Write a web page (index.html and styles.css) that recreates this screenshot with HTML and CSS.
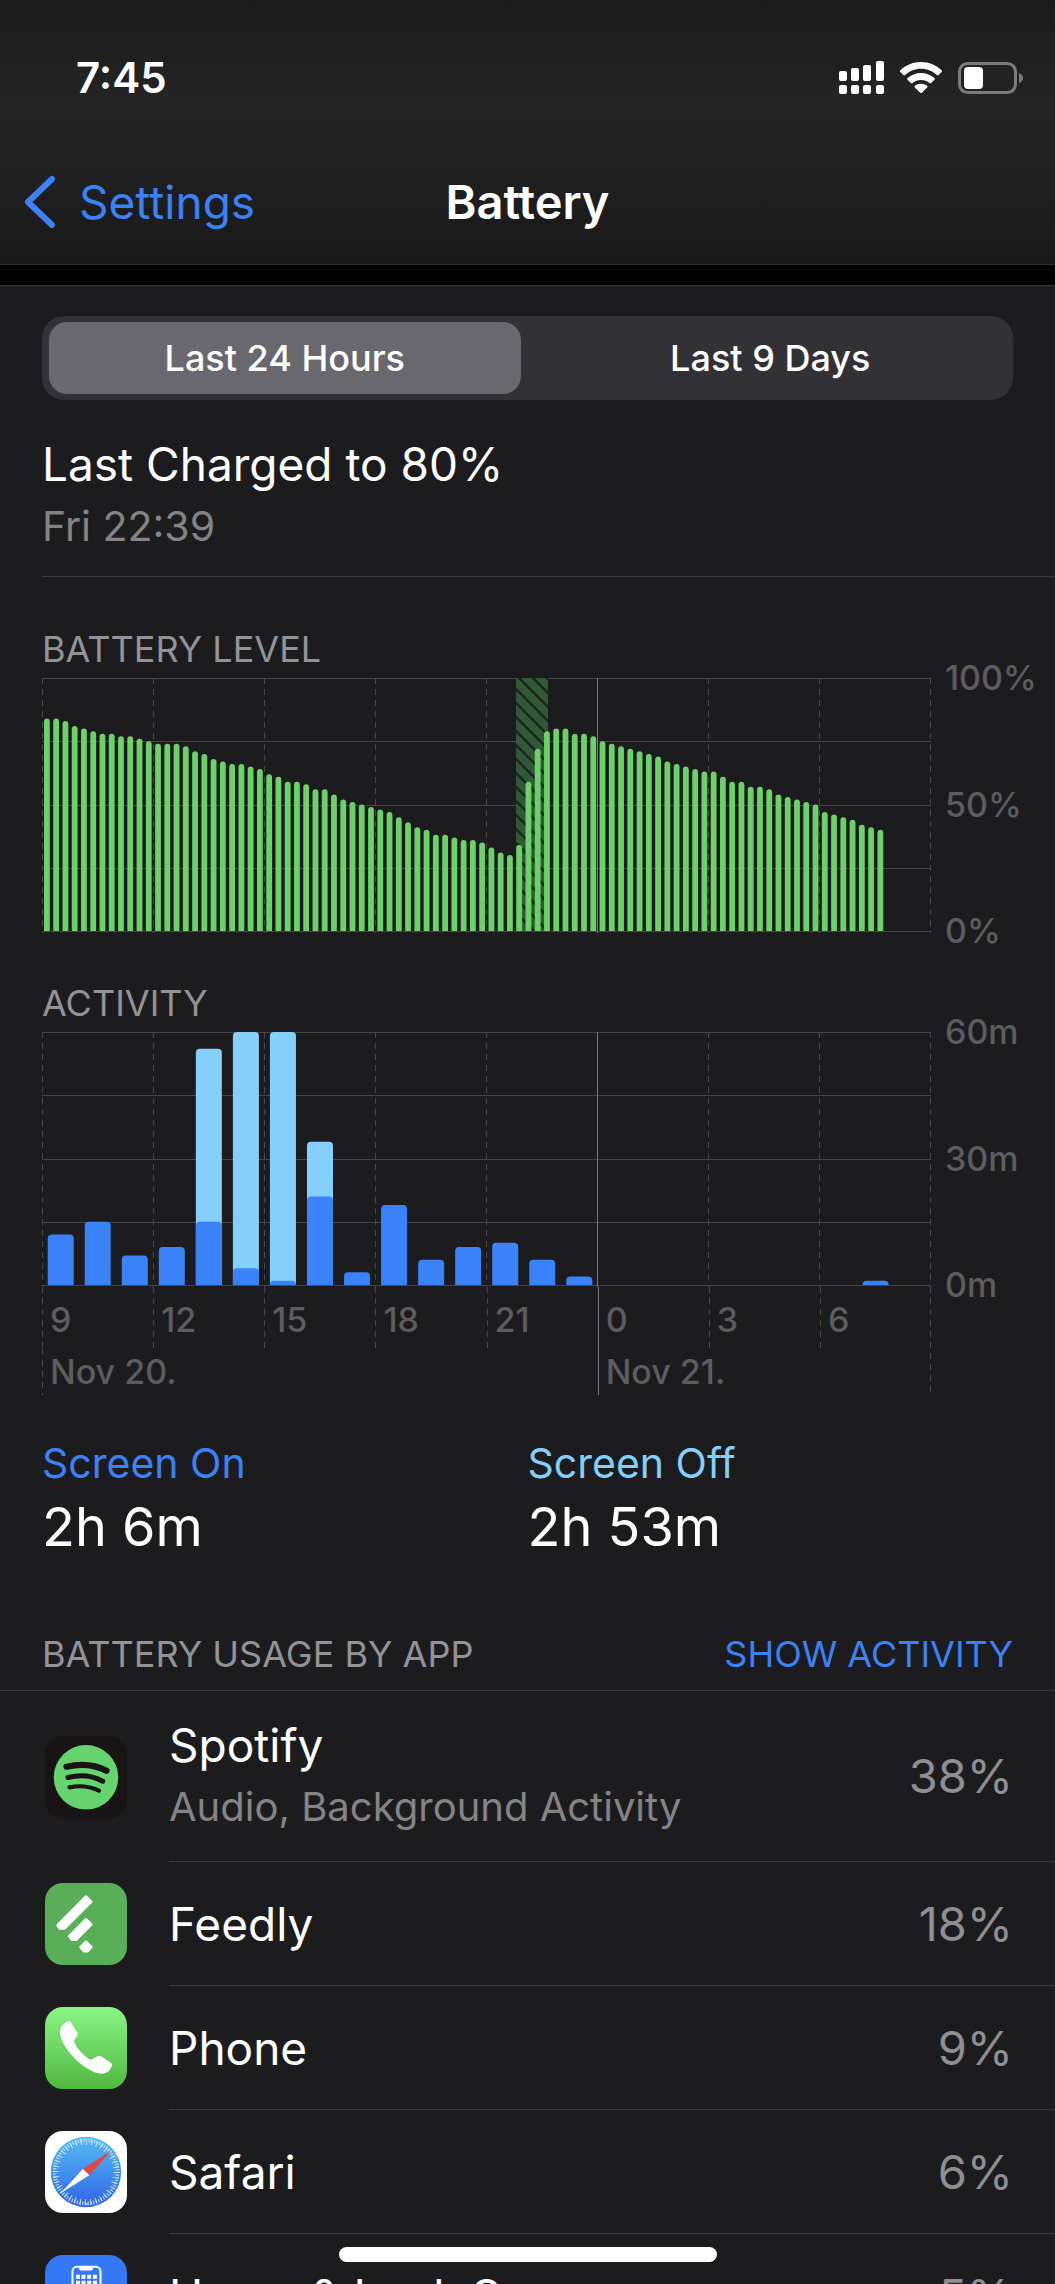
FILE: index.html
```html
<!DOCTYPE html>
<html lang="en">
<head>
<meta charset="utf-8">
<meta name="viewport" content="width=device-width, initial-scale=1">
<title>Battery</title>
<link rel="stylesheet" href="styles.css">
</head>
<body>
<div class="screen">
  <header class="header">
    <div class="status">
      <span class="status-time">7:45</span>
      <div class="status-icons">
        <svg class="signal" width="45" height="33" viewBox="0 0 45 33" fill="#fff" aria-hidden="true">
          <rect x="0" y="10" width="8" height="10" rx="2"/><rect x="12" y="7" width="8" height="13" rx="2"/>
          <rect x="24" y="4" width="8" height="16" rx="2"/><rect x="37" y="0" width="8" height="20" rx="2"/>
          <rect x="0" y="24" width="8" height="9" rx="2"/><rect x="12" y="24" width="8" height="9" rx="2"/>
          <rect x="24" y="24" width="8" height="9" rx="2"/><rect x="37" y="24" width="8" height="9" rx="2"/>
        </svg>
        <svg class="wifi" width="42" height="32" viewBox="0 0 42 32" fill="#fff" aria-hidden="true">
          <path d="M21 0C29 0 36.500 3.200 41.600 8.300Q42.500 9.200 41.600 10.100L38.700 13Q37.900 13.800 37 13C32.700 9 27.200 6.700 21 6.700S9.300 9 5 13Q4.100 13.800 3.300 13L.4 10.100Q-.5 9.200 .4 8.300C5.500 3.200 13 0 21 0Z"/>
          <path d="M21 10.900C26.200 10.900 30.900 12.900 34.400 16Q35.300 16.900 34.400 17.800L31.200 21Q30.400 21.700 29.500 21C27.200 19.100 24.300 17.900 21 17.900S14.800 19.100 12.500 21Q11.600 21.700 10.800 21L7.600 17.800Q6.700 16.900 7.600 16C11.100 12.900 15.800 10.900 21 10.900Z"/>
          <path d="M21 21.700C23.300 21.700 25.500 22.500 27.100 23.800Q28 24.600 27.100 25.500L21.900 30.700Q21 31.500 20.100 30.700L14.900 25.500Q14 24.600 14.900 23.800C16.500 22.500 18.700 21.700 21 21.700Z"/>
        </svg>
        <svg class="cell" width="65" height="32" viewBox="0 0 65 32" aria-hidden="true">
          <rect x="1.500" y="1.500" width="56" height="29" rx="8" fill="none" stroke="#7b7b7b" stroke-width="3"/>
          <rect x="6" y="5" width="19" height="22" rx="4" fill="#fff"/>
          <path d="M61 11Q65 12.500 65 16T61 21Z" fill="#7b7b7b"/>
        </svg>
      </div>
    </div>
    <nav class="nav">
      <a class="back" href="#">
        <svg width="32" height="54" viewBox="0 0 32 54" fill="none" stroke="currentColor" stroke-width="6" stroke-linecap="round" stroke-linejoin="round" aria-hidden="true"><path d="M28 4L4 27L28 50"/></svg>
        <span>Settings</span>
      </a>
      <h1 class="title">Battery</h1>
    </nav>
  </header>

  <main class="panel">
    <div class="segmented" role="radiogroup" aria-label="Time range">
      <label class="segment"><input type="radio" name="range" checked><span>Last 24 Hours</span></label>
      <label class="segment"><input type="radio" name="range"><span>Last 9 Days</span></label>
    </div>

    <section class="charged">
      <p class="charged-title">Last Charged to 80%</p>
      <p class="charged-time">Fri 22:39</p>
    </section>

    <section class="charts">
      <h2 class="caption">BATTERY LEVEL</h2>
      <div class="chart">
        <svg class="plot" id="level" viewBox="0 0 889 256" role="img" aria-label="Battery level">
          <defs>
            <pattern id="hatch" width="14" height="14" patternUnits="userSpaceOnUse">
              <rect width="14" height="14" fill="#305a37"/>
              <path d="M-2 -2L16 16M-2 12L2 16M12 -2L16 2" stroke="#17261a" stroke-width="2.600"/>
            </pattern>
          </defs>
        </svg>
        <div class="scale"><span>100%</span><span>50%</span><span>0%</span></div>
      </div>

      <h2 class="caption caption-next">ACTIVITY</h2>
      <div class="chart">
        <svg class="plot" id="activity" viewBox="0 0 889 256" role="img" aria-label="Activity"></svg>
        <div class="scale"><span>60m</span><span>30m</span><span>0m</span></div>
        <div class="axis">
          <span class="hour">9</span><span class="hour">12</span><span class="hour">15</span><span class="hour">18</span>
          <span class="hour">21</span><span class="hour midnight">0</span><span class="hour">3</span><span class="hour">6</span>
          <span class="date">Nov 20.</span><span class="date midnight">Nov 21.</span>
        </div>
      </div>
    </section>

    <dl class="totals">
      <div class="total"><dt class="on">Screen On</dt><dd>2h 6m</dd></div>
      <div class="total"><dt class="off">Screen Off</dt><dd>2h 53m</dd></div>
    </dl>

    <div class="usage-head">
      <h2 class="caption">BATTERY USAGE BY APP</h2>
      <button class="toggle" type="button">SHOW ACTIVITY</button>
    </div>
    <ul class="apps">
      <li class="app app-tall">
        <svg class="icon" viewBox="0 0 82 82" fill="none" stroke="#181414" stroke-linecap="round" aria-hidden="true">
          <rect width="82" height="82" rx="18" fill="#181414" stroke="none"/>
          <circle cx="41" cy="41.300" r="32.300" fill="#65d46e" stroke="none"/>
          <path d="M21.500 30.700Q44 25.500 61.500 34.800" stroke-width="6.200"/>
          <path d="M23 41.500Q42 36.500 57.800 45.200" stroke-width="5"/>
          <path d="M24.500 51.400Q40 48 54 54.700" stroke-width="4.200"/>
        </svg>
        <div class="app-body"><div class="app-text"><p class="app-name">Spotify</p><p class="app-note">Audio, Background Activity</p></div><span class="share">38%</span></div>
      </li>
      <li class="app">
        <svg class="icon" viewBox="0 0 82 82" aria-hidden="true">
          <rect width="82" height="82" rx="18" fill="#58af58"/>
          <g fill="#fff" stroke="#fff" stroke-width="3" stroke-linejoin="round">
            <path d="M41 13.800L46 18.800L19.500 45.300H15L12.700 42.200Z"/>
            <path d="M41 36.500L46 41.400L31 56.500H27L24.500 53.200Z"/>
            <path d="M41 59L46 64L42.500 68H39L35.800 64Z"/>
          </g>
        </svg>
        <div class="app-body"><p class="app-name">Feedly</p><span class="share">18%</span></div>
      </li>
      <li class="app">
        <svg class="icon" viewBox="0 0 82 82" aria-hidden="true">
          <defs><linearGradient id="phone-bg" x2="0" y2="1"><stop stop-color="#8af586"/><stop offset="1" stop-color="#50b83e"/></linearGradient></defs>
          <rect width="82" height="82" rx="18" fill="url(#phone-bg)"/>
          <path d="M22.500 14.500Q24.500 13.600 26 15.500L32 25Q33.400 27.200 32 29.300L29.700 32.500Q28.600 34.500 29.700 36.300Q34.500 45.500 44 52Q46 53.200 48 51.800L52.500 49.300Q54.500 48.300 56.500 49.500L65.500 55.500Q68 57.300 66.800 59.600Q63.500 66.700 57 66.700C41 66.700 15 40.500 15 24.500Q15.500 17.300 22.500 14.500Z" fill="#fff"/>
        </svg>
        <div class="app-body"><p class="app-name">Phone</p><span class="share">9%</span></div>
      </li>
      <li class="app">
        <svg class="icon" viewBox="0 0 82 82" aria-hidden="true">
          <defs><linearGradient id="safari-bg" x2="0" y2="1"><stop stop-color="#54bdf2"/><stop offset="1" stop-color="#3264e8"/></linearGradient></defs>
          <rect width="82" height="82" rx="18" fill="#fff"/>
          <circle cx="41" cy="41" r="35.200" fill="url(#safari-bg)"/>
          <circle cx="41" cy="41" r="31.500" fill="none" stroke="#d5eafd" stroke-width="3.600" pathLength="144" stroke-dasharray=".7 1.300"/>
          <circle cx="41" cy="41" r="30.300" fill="none" stroke="#d5eafd" stroke-width="6" pathLength="144" stroke-dasharray=".7 3.300"/>
          <path d="M66.500 19.500L37.800 38L44.300 44.300Z" fill="#e3483e"/>
          <path d="M16 62L37.800 38L44.300 44.300Z" fill="#fff"/>
        </svg>
        <div class="app-body"><p class="app-name">Safari</p><span class="share">6%</span></div>
      </li>
      <li class="app">
        <svg class="icon" viewBox="0 0 82 82" fill="#fff" aria-hidden="true">
          <rect width="82" height="82" rx="18" fill="#3478f6"/>
          <rect x="27.500" y="11.800" width="28" height="54" rx="4.500" fill="none" stroke="#fff" stroke-width="2"/>
          <path d="M34 11.500H48V13Q48 15.500 45.500 15.500H36.500Q34 15.500 34 13Z"/>
          <path d="M31 19.700h4v4h-4zM36.500 19.700h4v4h-4zM42.200 19.700h4v4h-4zM47.900 19.700h4v4h-4zM31 25.700h4v4h-4zM36.500 25.700h4v4h-4zM42.200 25.700h4v4h-4zM47.900 25.700h4v4h-4z"/>
        </svg>
        <div class="app-body"><p class="app-name">Home &amp; Lock Screen</p><span class="share">5%</span></div>
      </li>
    </ul>
  </main>
  <div class="home-indicator"></div>
</div>
<script src="script.js"></script>
</body>
</html>
```
FILE: styles.css
```css
* { box-sizing: border-box; margin: 0; padding: 0; }

body {
  background: #000;
  color: #fff;
  font-family: Inter, "Liberation Sans", sans-serif;
  font-size: 46px;
  line-height: 56px;
}

.screen {
  position: relative;
  display: flex;
  flex-direction: column;
  height: 100vh;
  overflow: hidden;
}

/* Status bar and navigation */
.header {
  flex: none;
  margin-bottom: 20px;
  border-bottom: 1px solid #2b2b2c;
  background: linear-gradient(#1a1a1a, #252525 40%, #222 60%, #181818);
}
.status {
  display: flex;
  align-items: center;
  justify-content: space-between;
  padding: 46px 32px 0 76px;
}
.status-time { font-size: 42px; line-height: 63px; font-weight: 600; }
.status-icons { display: flex; align-items: center; gap: 16px; }
.nav {
  display: grid;
  grid-template-columns: 1fr auto 1fr;
  align-items: center;
  padding: 30px 24px 0;
  height: 155px;
}
.back {
  display: flex;
  align-items: center;
  gap: 23px;
  color: #3b82f6;
  text-decoration: none;
}
.title { font-size: 47px; line-height: 56px; font-weight: 600; }

/* Scrolling content */
.panel {
  flex: 1;
  min-height: 0;
  overflow-y: auto;
  scrollbar-width: none;
  padding-top: 30px;
  border-top: 1px solid #3b3b3d;
  background: #1c1c1e;
}

.segmented {
  display: grid;
  grid-template-columns: 1fr 1fr;
  margin: 0 42px;
  border-radius: 22px;
  background: #323236;
}
.segment {
  position: relative;
  padding: 6px 7px;
  font-size: 36px;
  line-height: 72px;
  font-weight: 500;
  text-align: center;
}
.segment input { position: absolute; inset: 0; opacity: 0; }
.segment span { display: block; border-radius: 18px; }
.segment input:checked + span { background: #69686e; }

.charged {
  display: grid;
  gap: 9px;
  margin-left: 42px;
  padding: 36px 0 25px;
  border-bottom: 1px solid #3a3a3c;
}
.charged-time { color: #848487; font-size: 41px; line-height: 50px; }

.caption {
  color: #929297;
  font-size: 36px;
  line-height: 44px;
  font-weight: 400;
}

/* Charts */
.charts { padding: 50px 0 0 42px; }
.caption-next { margin-top: 48px; }
.chart {
  display: grid;
  grid-template-columns: 1fr 124px;
  margin-top: 6px;
  color: #5d5d60;
  font-size: 34px;
  line-height: 40px;
  font-weight: 500;
}
.plot { display: block; width: 100%; height: auto; }
.scale {
  display: flex;
  flex-direction: column;
  justify-content: space-between;
  margin: -19px 0 -18px;
  padding-left: 14px;
}
.grid-line { stroke: #464648; }
.grid-tick { stroke: #48484b; stroke-dasharray: 6 5; }
.grid-day { stroke: #77777a; }
.bar-level { fill: #6bd168; }
.bar-on { fill: #3a82f7; }
.bar-off { fill: #84cffc; }

.axis {
  --dash: repeating-linear-gradient(#48484b 0 6px, transparent 6px 11px);
  display: grid;
  grid-template-columns: repeat(8, 1fr);
  background: var(--dash) right / 1px 100% no-repeat;
}
.hour, .date {
  padding-left: 8px;
  background: var(--dash) left / 1px 100% no-repeat;
}
.hour { padding-top: 4px; line-height: 58px; }
.date { grid-column: span 5; line-height: 46px; }
.date.midnight { grid-column: span 3; }
.midnight { background: linear-gradient(#77777a, #77777a) left / 1px 100% no-repeat; }

/* Screen time totals */
.totals {
  display: grid;
  grid-template-columns: 1fr 1fr;
  padding: 43px 42px 0;
}
.total { display: grid; gap: 7px; }
.total dt { font-size: 41px; line-height: 50px; }
.total dd { font-size: 54px; line-height: 64px; }
.on { color: #3b82f6; }
.off { color: #82d0f8; }

/* App list */
.usage-head {
  display: flex;
  justify-content: space-between;
  margin-top: 73px;
  padding: 0 42px 14px;
  border-bottom: 1px solid #3a3a3c;
}
.toggle {
  border: 0;
  background: none;
  color: #3b82f6;
  font: inherit;
  font-size: 36px;
  line-height: 44px;
}
.apps { list-style: none; }
.app {
  display: flex;
  align-items: center;
  gap: 42px;
  height: 124px;
  padding-left: 45px;
}
.app-tall { height: 171px; }
.icon { flex: none; width: 82px; height: 82px; }
.app-body {
  flex: 1;
  align-self: stretch;
  display: flex;
  align-items: center;
  justify-content: space-between;
  padding-right: 42px;
  border-bottom: 1px solid #3a3a3c;
}
.app-text { display: grid; gap: 9px; padding-bottom: 3px; }
.app-note { color: #848487; font-size: 40px; line-height: 50px; }
.share { color: #8e8e93; font-size: 47px; }

.home-indicator {
  position: absolute;
  bottom: 22px;
  left: 50%;
  width: 378px;
  height: 15px;
  margin-left: -189px;
  border-radius: 8px;
  background: #fff;
}
```
FILE: script.js
```js
const SVG = "http://www.w3.org/2000/svg";
const WIDTH = 889;
const TOP = 1;
const HEIGHT = 253;
const BASE = TOP + HEIGHT;

// One reading per quarter of an hour, in percent.
const level = [
  84, 84, 83, 81, 80, 79, 78, 78, 77, 77, 76, 75, 74, 74, 74, 73, 71, 70, 68, 67,
  66, 66, 65, 64, 62, 61, 59, 59, 58, 56, 56, 54, 52, 51, 50, 49, 48, 47, 45, 43,
  41, 40, 38, 38, 37, 36, 36, 35, 33, 31, 30, 34, 59, 72, 79, 80, 80, 78, 78, 77,
  75, 74, 73, 72, 71, 70, 69, 67, 66, 65, 64, 63, 63, 61, 59, 59, 57, 57, 56, 54,
  53, 52, 51, 50, 47, 46, 45, 44, 42, 41, 40
];

// Minutes per hour: [screen on, total].
const activity = [
  [12, 12], [15, 15], [7, 7], [9, 9], [15, 56], [4, 60], [1, 60], [21, 34],
  [3, 3], [19, 19], [6, 6], [9, 9], [10, 10], [6, 6], [2, 2], [0, 0],
  [0, 0], [0, 0], [0, 0], [0, 0], [0, 0], [0, 0], [1, 1], [0, 0]
];

function add(svg, name, attrs) {
  const node = document.createElementNS(SVG, name);
  for (const key in attrs) node.setAttribute(key, attrs[key]);
  svg.append(node);
}

function bar(svg, cls, x, width, height, radius) {
  const r = Math.min(radius, height);
  const d = `M${x} ${BASE}v${r - height}q0 ${-r} ${r} ${-r}h${width - 2 * r}q${r} 0 ${r} ${r}v${height - r}z`;
  add(svg, "path", { class: cls, d });
}

function grid(svg) {
  for (let i = 0; i <= 4; i++) {
    const y = Math.round(TOP + HEIGHT * i / 4) + 0.5;
    add(svg, "line", { class: "grid-line", x1: 0, x2: WIDTH, y1: y, y2: y });
  }
  for (let i = 0; i <= 8; i++) {
    const x = Math.round((WIDTH - 1) * i / 8) + 0.5;
    add(svg, "line", { class: i === 5 ? "grid-day" : "grid-tick", x1: x, x2: x, y1: TOP, y2: 256 });
  }
}

const levelPlot = document.getElementById("level");
grid(levelPlot);
add(levelPlot, "rect", { x: 474, y: TOP, width: 32, height: HEIGHT, fill: "url(#hatch)" });
level.forEach((value, i) => {
  bar(levelPlot, "bar-level", 2 + i * WIDTH / 96, 5.8, HEIGHT * value / 100, 2.9);
});

const activityPlot = document.getElementById("activity");
grid(activityPlot);
activity.forEach(([on, total], i) => {
  const x = 5.7 + i * WIDTH / 24;
  if (total > on) bar(activityPlot, "bar-off", x, 26, HEIGHT * total / 60, 4);
  if (on) bar(activityPlot, "bar-on", x, 26, HEIGHT * on / 60, 4);
});
```
